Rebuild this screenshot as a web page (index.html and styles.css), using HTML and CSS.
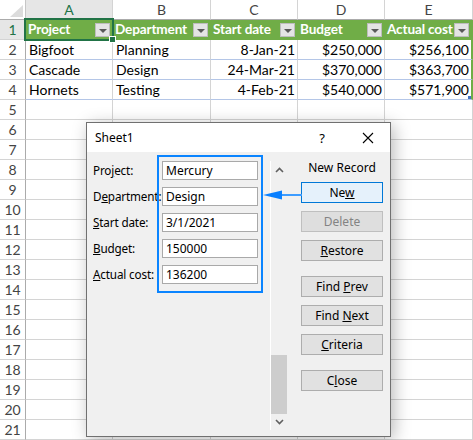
FILE: index.html
```html
<!DOCTYPE html>
<html>
<head>
<meta charset="utf-8">
<link rel="stylesheet" href="styles.css">
</head>
<body>
<div class="sheet">
  <div class="grid">
    <div class="corner"><svg width="25" height="20" viewBox="0 0 25 20"><polygon points="10,17 23,17 23,5" fill="#dcdcdc"/></svg></div>
    <div class="ch sel">A</div>
    <div class="ch">B</div>
    <div class="ch">C</div>
    <div class="ch">D</div>
    <div class="ch">E</div>

    <div class="rh sel">1</div>
    <div class="c hd">Project<span class="dd"></span></div>
    <div class="c hd">Department<span class="dd"></span></div>
    <div class="c hd">Start date<span class="dd"></span></div>
    <div class="c hd">Budget<span class="dd"></span></div>
    <div class="c hd last">Actual cost<span class="dd"></span></div>

    <div class="rh">2</div>
    <div class="c tb">Bigfoot</div>
    <div class="c tb">Planning</div>
    <div class="c tb num">8-Jan-21</div>
    <div class="c tb num">$250,000</div>
    <div class="c tb num last">$256,100</div>

    <div class="rh">3</div>
    <div class="c tb">Cascade</div>
    <div class="c tb">Design</div>
    <div class="c tb num">24-Mar-21</div>
    <div class="c tb num">$370,000</div>
    <div class="c tb num last">$363,700</div>

    <div class="rh">4</div>
    <div class="c tb">Hornets</div>
    <div class="c tb">Testing</div>
    <div class="c tb num">4-Feb-21</div>
    <div class="c tb num">$540,000</div>
    <div class="c tb num last">$571,900<span class="rsz"></span></div>

    <div class="rh">5</div><div class="c"></div><div class="c"></div><div class="c"></div><div class="c"></div><div class="c"></div>
    <div class="rh">6</div><div class="c"></div><div class="c"></div><div class="c"></div><div class="c"></div><div class="c"></div>
    <div class="rh">7</div><div class="c"></div><div class="c"></div><div class="c"></div><div class="c"></div><div class="c"></div>
    <div class="rh">8</div><div class="c"></div><div class="c"></div><div class="c"></div><div class="c"></div><div class="c"></div>
    <div class="rh">9</div><div class="c"></div><div class="c"></div><div class="c"></div><div class="c"></div><div class="c"></div>
    <div class="rh">10</div><div class="c"></div><div class="c"></div><div class="c"></div><div class="c"></div><div class="c"></div>
    <div class="rh">11</div><div class="c"></div><div class="c"></div><div class="c"></div><div class="c"></div><div class="c"></div>
    <div class="rh">12</div><div class="c"></div><div class="c"></div><div class="c"></div><div class="c"></div><div class="c"></div>
    <div class="rh">13</div><div class="c"></div><div class="c"></div><div class="c"></div><div class="c"></div><div class="c"></div>
    <div class="rh">14</div><div class="c"></div><div class="c"></div><div class="c"></div><div class="c"></div><div class="c"></div>
    <div class="rh">15</div><div class="c"></div><div class="c"></div><div class="c"></div><div class="c"></div><div class="c"></div>
    <div class="rh">16</div><div class="c"></div><div class="c"></div><div class="c"></div><div class="c"></div><div class="c"></div>
    <div class="rh">17</div><div class="c"></div><div class="c"></div><div class="c"></div><div class="c"></div><div class="c"></div>
    <div class="rh">18</div><div class="c"></div><div class="c"></div><div class="c"></div><div class="c"></div><div class="c"></div>
    <div class="rh">19</div><div class="c"></div><div class="c"></div><div class="c"></div><div class="c"></div><div class="c"></div>
    <div class="rh">20</div><div class="c"></div><div class="c"></div><div class="c"></div><div class="c"></div><div class="c"></div>
    <div class="rh">21</div><div class="c"></div><div class="c"></div><div class="c"></div><div class="c"></div><div class="c"></div>
  </div>

  <div class="selbox"><span class="handle"></span></div>

  <div class="dialog">
    <div class="titlebar">
      <span class="title">Sheet1</span>
      <span class="help">?</span>
      <svg class="close-x" width="12" height="12" viewBox="0 0 12 12"><path d="M1 1 L11 11 M11 1 L1 11" stroke="#000" stroke-width="1.1" fill="none"/></svg>
    </div>
    <div class="dbody">
      <div class="labels">
        <div class="lbl">Pro<u>j</u>ect:</div>
        <div class="lbl">D<u>e</u>partment:</div>
        <div class="lbl"><u>S</u>tart date:</div>
        <div class="lbl"><u>B</u>udget:</div>
        <div class="lbl"><u>A</u>ctual cost:</div>
      </div>
      <div class="fields">
        <div class="inp">Mercury</div>
        <div class="inp">Design</div>
        <div class="inp">3/1/2021</div>
        <div class="inp">150000</div>
        <div class="inp">136200</div>
      </div>
      <div class="vscroll">
        <div class="sbtn"><svg width="9" height="6" viewBox="0 0 9 6"><path d="M1 5 L4.5 1.5 L8 5" stroke="#606060" stroke-width="1.6" fill="none"/></svg></div>
        <div class="track"></div>
        <div class="thumb"></div>
        <div class="sbtn down"><svg width="9" height="6" viewBox="0 0 9 6"><path d="M1 1 L4.5 4.5 L8 1" stroke="#606060" stroke-width="1.6" fill="none"/></svg></div>
      </div>
      <div class="buttons">
        <div class="rec">New Record</div>
        <div class="btn focus">Ne<u>w</u></div>
        <div class="btn disabled">Delete</div>
        <div class="btn"><u>R</u>estore</div>
        <div class="btn sep">Find <u>P</u>rev</div>
        <div class="btn">Find <u>N</u>ext</div>
        <div class="btn"><u>C</u>riteria</div>
        <div class="btn sep">C<u>l</u>ose</div>
      </div>
    </div>
  </div>

  <svg class="arrow" width="42" height="14" viewBox="0 0 42 14">
    <line x1="16" y1="7" x2="40" y2="7" stroke="#3d9cff" stroke-width="2"/>
    <polygon points="1,7 20,2.5 20,11.5" fill="#0a80ff"/>
  </svg>
</div>
</body>
</html>
```

FILE: styles.css
```css
html, body {
  margin: 0;
  padding: 0;
  background: #fff;
}

.sheet {
  position: relative;
  width: 473px;
  height: 440px;
  overflow: hidden;
  font-family: "Lato", "Liberation Sans", sans-serif;
}

.grid {
  display: grid;
  grid-template-columns: 26px 87px 98px 87px 87px 88px;
  grid-template-rows: 20px;
  grid-auto-rows: 20px;
}

.grid > div {
  box-sizing: border-box;
}

.corner {
  border-right: 1px solid #c6c6c6;
  border-bottom: 1px solid #ababab;
  background: #fff;
}
.corner svg { display: block; }

.ch {
  border-right: 1px solid #d4d4d4;
  border-bottom: 1px solid #ababab;
  background: #fff;
  color: #444;
  font-size: 14px;
  text-align: center;
  line-height: 19px;
}

.rh {
  border-right: 1px solid #ababab;
  border-bottom: 1px solid #d4d4d4;
  background: #fff;
  color: #444;
  font-size: 14px;
  text-align: center;
  line-height: 20px;
}

.ch.sel, .rh.sel {
  background: #e6e6e6;
  color: #217346;
}

.c {
  border-right: 1px solid #d4d4d4;
  border-bottom: 1px solid #d4d4d4;
  font-size: 14px;
  line-height: 19px;
  padding: 0 3px;
  color: #000;
  white-space: nowrap;
  overflow: hidden;
  position: relative;
}

.c.hd {
  background: #70ad47;
  color: #fff;
  font-weight: bold;
  font-size: 13.6px;
  letter-spacing: -0.15px;
  padding-left: 2px;
  border-right-color: #70ad47;
  border-bottom-color: #70ad47;
}

.c.tb {
  border-bottom-color: #b4c6e7;
}

.c.num {
  text-align: right;
  padding-right: 2px;
}

.c.last {
  border-right: 2px solid #70ad47;
}

.dd {
  position: absolute;
  right: 2px;
  top: 3px;
  width: 15px;
  height: 14px;
  box-sizing: border-box;
  background: #e4e4e4;
  border: 1px solid #bdbdbd;
}
.dd::after {
  content: "";
  position: absolute;
  left: 3px;
  top: 5px;
  border-left: 4px solid transparent;
  border-right: 4px solid transparent;
  border-top: 4px solid #595959;
}

.rsz {
  position: absolute;
  right: 0;
  bottom: 0;
  width: 3px;
  height: 3px;
  background: #4472c4;
}

.selbox {
  position: absolute;
  left: 24px;
  top: 18px;
  width: 90px;
  height: 23px;
  box-sizing: border-box;
  border: 2px solid #217346;
}
.selbox .handle {
  position: absolute;
  right: -4px;
  bottom: -4px;
  width: 5px;
  height: 5px;
  background: #217346;
  border: 1px solid #fff;
}

/* Dialog */
.dialog {
  position: absolute;
  left: 86px;
  top: 122px;
  width: 305px;
  height: 315px;
  box-sizing: border-box;
  border: 1px solid #707070;
  background: #f0f0f0;
  box-shadow: 3px 3px 16px rgba(0, 0, 0, 0.28);
  font-family: "Noto Sans", "Open Sans", sans-serif;
  font-size: 12px;
  color: #000;
  display: flex;
  flex-direction: column;
}

.titlebar {
  height: 29px;
  background: #fff;
  display: flex;
  align-items: center;
  padding: 0 0 0 8px;
}
.title {
  flex: 1;
  font-size: 12px;
}
.help {
  font-size: 13px;
  width: 12px;
  text-align: center;
  margin-right: 34px;
}
.close-x {
  margin-right: 16px;
}

.dbody {
  flex: 1;
  display: flex;
  align-items: flex-start;
  padding-left: 6px;
}

.labels {
  width: 64px;
  padding-top: 9px;
  display: flex;
  flex-direction: column;
  gap: 7px;
}
.lbl {
  height: 19px;
  line-height: 19px;
  white-space: nowrap;
  font-size: 11.7px;
  letter-spacing: -0.15px;
}

.fields {
  margin-top: 3px;
  width: 106px;
  box-sizing: border-box;
  border: 2px solid #0a84ff;
  padding: 4px 3px 7px 3px;
  display: flex;
  flex-direction: column;
  gap: 7px;
}
.inp {
  height: 19px;
  box-sizing: border-box;
  border: 1px solid #a9a9a9;
  background: #fff;
  padding-left: 3px;
  line-height: 17px;
}

.vscroll {
  margin-top: 9px;
  margin-left: 7px;
  width: 17px;
  height: 269px;
  box-sizing: border-box;
  border-left: 1px solid #fff;
  display: flex;
  flex-direction: column;
}
.sbtn {
  height: 17px;
  display: flex;
  align-items: center;
  justify-content: center;
}
.sbtn.down { height: 16px; }
.track { flex: 1; }
.thumb {
  height: 59px;
  background: #cdcdcd;
}

.buttons {
  margin-left: 14px;
  width: 82px;
  display: flex;
  flex-direction: column;
  gap: 8px;
}
.rec {
  margin-top: 8px;
  line-height: 16px;
  height: 16px;
  text-align: center;
  margin-bottom: -2px;
}
.btn {
  height: 21px;
  box-sizing: border-box;
  border: 1px solid #adadad;
  background: #e1e1e1;
  text-align: center;
  line-height: 19px;
}
.btn.focus {
  background: #e5f1fb;
  border-color: #0078d7;
}
.btn.disabled {
  color: #838383;
  border-color: #bfbfbf;
  background: #dedede;
}
.btn.sep {
  margin-top: 7px;
}

.arrow {
  position: absolute;
  left: 262px;
  top: 188px;
}
```
